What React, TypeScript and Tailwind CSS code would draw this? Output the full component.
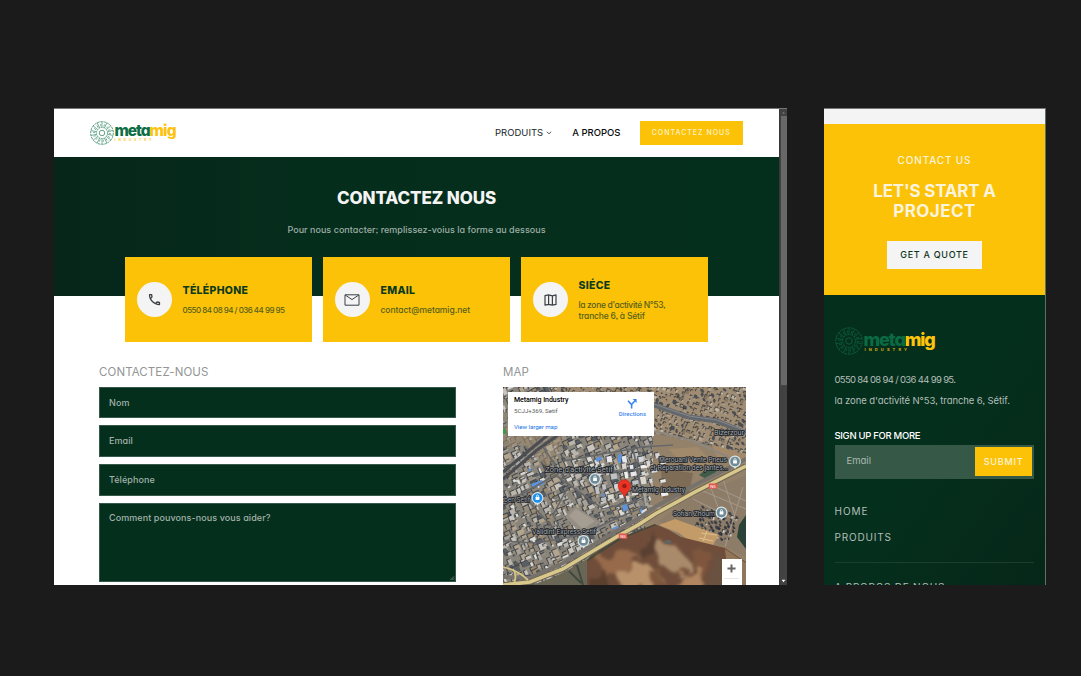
import React from 'react'
import type { ReactNode } from 'react'
import { MdOutlineCall } from 'react-icons/md'

const inter = "font-['Inter','Liberation_Sans',sans-serif] [font-feature-settings:'cv11','ss03']"

function Wheel({ className }: { className: string }) {
  const spokes = Array.from({ length: 14 }, (_, i) => (i * 360) / 14)
  return (
    <svg viewBox="0 0 48 48" className={className} fill="none" stroke="currentColor">
      <circle cx="24" cy="24" r="22.6" strokeWidth="1.5" strokeDasharray="5 1.4" />
      <circle cx="24" cy="24" r="11" strokeWidth="1.2" strokeDasharray="3 1" />
      <circle cx="24" cy="24" r="5.5" strokeWidth="1.4" />
      {spokes.map((a) => (
        <g key={a} transform={`rotate(${a} 24 24)`}>
          <path d="M24 2v11M21.5 6v5" strokeWidth="1.1" />
        </g>
      ))}
    </svg>
  )
}

function DesktopLogo() {
  return (
    <div className="flex h-6 items-center">
      <Wheel className="size-6 text-[#1f7a55]" />
      <div className="ml-px flex flex-col">
        <div className="h-[14px] text-[15.5px] leading-[14px] font-extrabold tracking-[-1.1px] text-[#0d6e45]">
          meta<span className="tracking-[-0.75px] text-[#fdc20a]">mig</span>
        </div>
        <div className="h-1 text-[3.5px] leading-[4px] font-bold tracking-[2.7px] text-[#fdcb3a]">INDUSTRY</div>
      </div>
    </div>
  )
}

function MobileLogo() {
  return (
    <div className="flex h-7 items-center">
      <Wheel className="size-7 text-[#0d6540]" />
      <div className="ml-px flex flex-col">
        <div className="h-[17px] text-[18px] leading-[17px] font-extrabold tracking-[-1.1px] text-[#0a6b42]">
          meta<span className="tracking-[-1.2px] text-[#fdc50a]">mig</span>
        </div>
        <div className="ml-px h-1 text-[4px] leading-[4px] font-bold tracking-[3.1px] text-[#d6a90f]">INDUSTRY</div>
      </div>
    </div>
  )
}

function Header() {
  return (
    <header className="flex h-[47.5px] shrink-0 items-center bg-white pr-9 pl-[35.5px]">
      <DesktopLogo />
      <nav className="ml-auto flex items-center">
        <span className="text-[9.5px] leading-3 text-[#16251f]">PRODUITS</span>
        <svg viewBox="0 0 6 4" className="ml-[3px] h-1 w-[6px]" fill="none" stroke="#333" strokeWidth="0.8">
          <path d="M0.8 0.8 3 2.8 5.2 0.8" />
        </svg>
        <span className="ml-5 text-[9.5px] leading-3 font-medium text-[#0b0b0b]">A PROPOS</span>
        <a className="ml-[19px] flex h-[24.5px] w-[103.5px] items-center justify-center bg-[#fcc207] text-[7px] font-medium tracking-[1px] text-[#fdf1c6]">
          CONTACTEZ NOUS
        </a>
      </nav>
    </header>
  )
}

function Card({ icon, title, children }: { icon: ReactNode; title: string; children: ReactNode }) {
  return (
    <article className="flex h-[85px] w-[187px] items-center bg-[#fcc207] pl-3">
      <div className="flex size-[35px] shrink-0 items-center justify-center rounded-full bg-[#f4f4f4] text-[#3b3f46]">{icon}</div>
      <div className="ml-[11px] pt-0.5">
        <h3 className="text-[10.5px] leading-3 font-extrabold tracking-[0.3px] text-[#0c3a1c]">{title}</h3>
        <div className="mt-2 text-[8.5px] leading-[11px] font-medium text-[#55601a]">{children}</div>
      </div>
    </article>
  )
}

function MailIcon() {
  return (
    <svg viewBox="0 0 16 12" className="h-3 w-4" fill="none" stroke="currentColor" strokeWidth="1">
      <path d="M1 0.8h14v10.4H1zM1.2 1 8 5.6 14.8 1" />
    </svg>
  )
}

function MapIcon() {
  return (
    <svg viewBox="0 0 13 12" className="h-3 w-[13px]" fill="none" stroke="currentColor" strokeWidth="1.2" strokeLinejoin="round">
      <path d="M1 1.6 4.6 0.9 8.4 1.8 12 0.9V10.4L8.4 11.2 4.6 10.3 1 11.1zM4.6 0.9V10.3M8.4 1.8V11.2" />
    </svg>
  )
}

type Block = { x: number; y: number; w: number; h: number; fill: string }

function makeRandom(seed: number) {
  let s = seed
  return () => {
    s = (s * 1664525 + 1013904223) % 4294967296
    return s / 4294967296
  }
}

function makeBlocks(
  seed: number,
  area: [number, number, number, number],
  step: number,
  size: [number, number],
  palette: string[],
): Block[] {
  const rnd = makeRandom(seed)
  const out: Block[] = []
  for (let y = area[1]; y < area[3]; y += step) {
    for (let x = area[0]; x < area[2]; x += step * 1.05) {
      out.push({
        x: x + rnd() * step * 0.8,
        y: y + rnd() * step * 0.8,
        w: size[0] + rnd() * (size[1] - size[0]),
        h: size[0] + rnd() * (size[1] - size[0]),
        fill: palette[Math.floor(rnd() * palette.length)],
      })
    }
  }
  return out
}

const city = makeBlocks(7, [-60, -10, 250, 290], 5.4, [1.6, 7], [
  '#c9c5bd', '#a8a39a', '#dddbd6', '#8d877c', '#7d7b76', '#b3a48e', '#9a8f7e', '#5a5e64', '#b9b5ad', '#9c8a70',
])
const houses = makeBlocks(21, [50, -60, 260, 80], 4.5, [1.2, 4], [
  '#b4a48d', '#9d8a70', '#c2b8a8', '#857763', '#4c5058', '#a89a86', '#a38b6c', '#a08d74',
])
const shops = makeBlocks(5, [0, 0, 72, 44], 9, [3, 7.5], ['#e6e7e8', '#d4d6d8', '#f0f0ee', '#bfc1c3', '#dcd7cd', '#a39a8d'])
const plots = makeBlocks(13, [0, 0, 34, 26], 4, [1.4, 2.8], ['#3a3f47', '#cfc8bc', '#8f877a', '#2f353d'])

function Blocks({ items }: { items: Block[] }) {
  return (
    <>
      {items.map((b, i) => (
        <g key={i}>
          <rect x={b.x - 1} y={b.y - 1} width={b.w} height={b.h} fill="#2e343c" opacity="0.75" />
          <rect x={b.x} y={b.y} width={b.w} height={b.h} fill={b.fill} />
        </g>
      ))}
    </>
  )
}

function Place({ x, y, fill = '#6e8b98' }: { x: number; y: number; fill?: string }) {
  return (
    <g transform={`translate(${x} ${y})`}>
      <path d="M-2.5 4.6 0 7.6 2.5 4.6z" fill="#dfe6e9" />
      <circle r="5.4" fill={fill} stroke="#dfe6e9" strokeWidth="1.2" />
      <rect x="-1.9" y="-1.2" width="3.8" height="3.2" rx="0.5" fill="#fff" />
      <path d="M-1 -1.2v-0.8a1 1 0 0 1 2 0v0.8" fill="none" stroke="#fff" strokeWidth="0.7" />
    </g>
  )
}

function Label({ x, y, w, children }: { x: number; y: number; w: number; children: string }) {
  return (
    <text x={x} y={y} textLength={w} lengthAdjust="spacingAndGlyphs" fontSize="6.8" fill="#a4a9ad" stroke="#1b2025" strokeWidth="1.7" paintOrder="stroke" strokeLinejoin="round" fontFamily="Roboto, sans-serif">
      {children}
    </text>
  )
}

function Satellite() {
  return (
    <svg viewBox="0 0 243 198" className="block h-[198px] w-[243px]">
      <defs>
        <filter id="soft"><feGaussianBlur stdDeviation="0.5" /></filter>
        <filter id="cloud" x="-30%" y="-30%" width="160%" height="160%">
          <feTurbulence type="fractalNoise" baseFrequency="0.06" numOctaves="3" seed="4" result="n" />
          <feDisplacementMap in="SourceGraphic" in2="n" scale="22" result="d" />
          <feGaussianBlur in="d" stdDeviation="1.8" />
        </filter>
        <clipPath id="houseArea"><path d="M151 0H243V68L205 56 168 50 151 45zM50 0H151V6H50z" /></clipPath>
        <clipPath id="field"><path d="M84 198V173L96 160 119 150 152 137 166 143 178 150 222 161 243 175V198z" /></clipPath>
      </defs>
      <rect width="243" height="198" fill="#8a857b" />
      <g filter="url(#soft)">
        <g transform="rotate(-24 0 0) translate(-30 0)"><Blocks items={city} /></g>
        <path d="M0 40 60 46 56 64 44 80 34 72 20 58 0 60z" fill="#9a876e" opacity="0.6" />
        <path d="M150 46 205 58 243 72V198H180L140 136 150 108z" fill="#94816a" />
        <path d="M158 82 190 86 186 108 160 112z" fill="#7e6c56" />
        <path d="M165 62 195 60 210 76 186 82z" fill="#a18a6c" />
        <path d="M206 52 243 62V78L214 70z" fill="#a4896a" />
        <path d="M196 88 206 80 214 84 205 93z" fill="#3f5c48" />
        <g clipPath="url(#houseArea)">
          <rect x="50" width="193" height="75" fill="#a08d74" />
          <g transform="rotate(22 190 30)"><Blocks items={houses} /></g>
        </g>
        <g transform="translate(84 72) rotate(-10)"><Blocks items={shops} /></g>
        <path d="M62 130 72 119 98 136 78 147z" fill="#958e84" />
        <path d="M66 129 73 122 92 134 80 142z" fill="#a59d91" />
        <g fill="#5d94e0">
          <path d="M28 97 39 93 41 97 30 101zM92 72 97 69 99 72 94 75zM115 68 119 67 118 76 115 76zM119 118 124 117 125 123 120 124zM136 121 140 119 138 127zM98 109 102 106 101 110zM110 141 115 139 117 142 112 145zM24 84 28 81 28 84z" />
        </g>
        <path d="M0 85 52 42M0 92 34 63 58 46" stroke="#4b4e52" strokeWidth="3" fill="none" />
        <path d="M0 88 54 44" stroke="#92918e" strokeWidth="0.7" fill="none" />
        <path d="M0 154 34 156 78 148 112 132 146 118M60 74 105 66 140 60 170 58M52 88 72 102 100 122 140 112M40 60 66 98 50 128 62 150M130 62 142 118M20 108 60 152M0 116 24 104 56 86 100 86 138 82" stroke="#66676a" strokeWidth="1.6" fill="none" />
        <path d="M151 18 186 30 214 34 243 46" stroke="#64676c" strokeWidth="5" fill="none" />
        <path d="M151 17 186 29 214 33 243 44" stroke="#8c8f93" strokeWidth="0.8" fill="none" />
        <path d="M150 44 190 54 243 78" stroke="#8d877d" strokeWidth="2" fill="none" />
        <path d="M140 100 143 118 160 122" stroke="#aaa59a" strokeWidth="2" fill="none" />
        <path d="M156 134 178 116 234 92 243 88V170L222 160z" fill="#8d7c68" />
        <g transform="translate(199 118) rotate(16)"><Blocks items={plots} /></g>
        <path d="M200 104 243 122M208 98 243 114M190 112 234 134M206 96 218 128M220 92 232 130M240 100 222 160" stroke="#a3998c" strokeWidth="1" fill="none" />
        <path d="M156 138 172 132 216 148 210 158 184 152 176 146z" fill="#c39b69" />
        <path d="M198 146 214 148M196 151 210 154M204 144 200 154" stroke="#dec08f" strokeWidth="1" />
        <path d="M236 138 243 128V162L234 150z" fill="#2c4339" />
        <g clipPath="url(#field)">
          <rect x="80" y="130" width="163" height="68" fill="#704e3a" />
          <g filter="url(#cloud)">
            <path d="M94 172 118 162 136 168 128 186 104 190z" fill="#966b4c" />
            <path d="M156 156 176 162 188 176 174 188 154 176z" fill="#a98a6b" />
            <path d="M114 186 144 176 164 196 122 206z" fill="#b8916b" />
            <path d="M190 162 208 164 204 190 190 198z" fill="#7f573d" />
            <path d="M132 156 154 146 154 166 136 168z" fill="#5a4030" />
            <path d="M212 166 244 178 240 204 206 204z" fill="#6a513f" />
            <path d="M88 190 102 182 108 204 88 204z" fill="#5b3f2f" />
            <path d="M178 186 198 180 200 204 172 204z" fill="#b08560" />
            <path d="M146 184 158 182 164 200 150 202z" fill="#80583e" />
          </g>
          <ellipse cx="165" cy="155" rx="3.5" ry="2.2" fill="#65645f" />
          <path d="M84 173 119 150 152 137" stroke="#2f4236" strokeWidth="3" fill="none" opacity="0.6" />
        </g>
        <path d="M222 162 243 176V198H226z" fill="#9a8061" opacity="0.8" />
        <path d="M30 198 56 188 84 172V198z" fill="#6b6655" />
        <path d="M66 184 78 196M74 178 80 198" stroke="#3f4a40" strokeWidth="2" />
        <path d="M0 190 27 191 60 176 115 143 135 132 152 120 192 98 243 72" stroke="#77736c" strokeWidth="4" fill="none" />
        <path d="M0 198 27 195 60 182 115 149 135 138 152 127 192 105 243 79" stroke="#6d6554" strokeWidth="5.4" fill="none" />
        <path d="M0 198 27 195 60 182 115 149 135 138 152 127 192 105 243 79" stroke="#d9c88c" strokeWidth="3.6" fill="none" />
        <path d="M0 180Q14 183 25 193M10 182Q15 190 10 198" stroke="#d6c585" strokeWidth="1.7" fill="none" />
      </g>
      <path d="M0 42h3v5H0z" fill="#3f9a45" />
      <Label x={42} y={84.5} w={68}>Zone d'activité Setif</Label>
      <Label x={156} y={75} w={68}>Merouani Vente Pneus</Label>
      <Label x={147} y={82.5} w={78}>et Réparation des jantes...</Label>
      <Label x={129} y={105} w={53}>Metamig Industry</Label>
      <Label x={170} y={129} w={42}>Sofian Zhoum</Label>
      <Label x={29} y={146.5} w={64}>Validint Express Setif</Label>
      <Label x={1} y={114.5} w={26}>ben Setif</Label>
      <Label x={211} y={48} w={30}>Bizerzour</Label>
      <Place x={92} y={92} />
      <Place x={232} y={74.5} />
      <Place x={218.5} y={125.5} />
      <Place x={80.5} y={154} />
      <Place x={34.5} y={111} fill="#1a91ee" />
      {[[120, 149], [210, 99]].map(([x, y]) => (
        <g key={x} transform={`translate(${x} ${y})`}>
          <rect x="-4.2" y="-2.6" width="8.4" height="5.4" rx="0.8" fill="#e0574c" />
          <text y="1.7" textAnchor="middle" fontSize="4.4" fill="#fff" fontFamily="Roboto, sans-serif">N5</text>
        </g>
      ))}
      <path d="M121.4 111C120.5 106 115 103.5 115 99a6.4 6.4 0 0 1 12.8 0C127.8 103.5 122.3 106 121.4 111z" fill="#ea3323" stroke="#b3261a" strokeWidth="0.4" />
      <circle cx="121.4" cy="99" r="2.3" fill="#9c1c14" />
    </svg>
  )
}

function MapPanel() {
  return (
    <div className="relative mt-2 h-[198px] w-[243px] overflow-hidden font-['Roboto',sans-serif]">
      <Satellite />
      <div className="absolute top-[5px] left-[5px] flex h-[44px] w-[146px] justify-between bg-white pt-1 pr-2 pl-[6px]">
        <div className="flex flex-col whitespace-nowrap">
          <span className="text-[7px] leading-[9px] font-medium tracking-[-0.05px] text-black">Metamig Industry</span>
          <span className="mt-[2px] text-[6.2px] leading-[8px] text-[#5b5b5b]">5CJJ+369, Setif</span>
          <span className="mt-[8px] text-[6.2px] leading-[8px] tracking-[-0.08px] text-[#1a73e8]">View larger map</span>
        </div>
        <div className="flex flex-col items-center">
          <svg viewBox="0 0 10 11" className="mt-[2px] h-[11px] w-[10px]" fill="none" stroke="#3b86f0" strokeWidth="1.6">
            <path d="M4.6 10.5V6.5L8 2.8M4.6 6.6 1 2.8" />
            <path d="M5.6 1h4v4z" fill="#3b86f0" stroke="none" />
          </svg>
          <span className="mt-px text-[6px] leading-[8px] font-medium text-[#3b86f0]">Directions</span>
        </div>
      </div>
      <div className="absolute top-[171.5px] left-[218.5px] flex h-[27px] w-[20px] flex-col items-center bg-white">
        <svg viewBox="0 0 10 10" className="mt-[5.5px] size-[9px]" stroke="#666" strokeWidth="2.2">
          <path d="M5 0.5v9M0.5 5h9" />
        </svg>
        <span className="mt-[5px] h-px w-[15px] bg-[#e6e6e6]" />
      </div>
    </div>
  )
}

const field =
  'flex w-[357px] border border-[#4d6b5e]/70 bg-[#052f1d] pl-[9px] text-[9px] font-medium tracking-[0.08px] text-[#a3b2aa]'

function ContactForm() {
  return (
    <form className="w-[357px]">
      <h2 className="text-[11.5px] leading-[14px] tracking-[0.1px] text-[#929694]">CONTACTEZ-NOUS</h2>
      <div className={`${field} mt-[7.5px] h-[31.5px] items-center`}>Nom</div>
      <div className={`${field} mt-[6.5px] h-8 items-center`}>Email</div>
      <div className={`${field} mt-[7px] h-8 items-center`}>Téléphone</div>
      <div className={`${field} mt-[7px] h-[79px] justify-between pt-[8px] leading-3`}>
        Comment pouvons-nous vous aider?
        <svg viewBox="0 0 6 6" className="size-[6px] self-end" stroke="#9aa8a1" strokeWidth="0.7">
          <path d="M1.5 5 5 1.5M3.5 5 5 3.5" />
        </svg>
      </div>
    </form>
  )
}

function Scrollbar() {
  return (
    <div className="flex w-2 flex-col items-center border-l border-[#383838] bg-[#424242]">
      <svg viewBox="0 0 7 8" className="h-[7px] w-[7px] shrink-0"><path d="M2 5h3L3.5 3.3z" fill="#858585" /></svg>
      <div className="h-[269px] w-[6px] bg-[#686868]" />
      <svg viewBox="0 0 7 8" className="mt-auto h-2 w-[7px] shrink-0"><path d="M1.600 2.8h3.800L3.500 5.200z" fill="#fff" /></svg>
    </div>
  )
}

function DesktopWindow() {
  return (
    <section className="flex h-[477px] w-[733px] shrink-0 overflow-hidden border-t border-[#777]">
      <div className="flex w-[725px] flex-col bg-white">
        <Header />
        <div className="flex h-[139px] shrink-0 flex-col items-center bg-linear-to-r from-[#06261a] via-[#052d1c] via-35% to-[#052f1d]">
          <h1 className="mt-[30px] text-[17px] leading-[22px] font-extrabold tracking-[-0.1px] text-[#f4f4f4]">CONTACTEZ NOUS</h1>
          <p className="mt-[15.5px] text-[9px] leading-3 font-medium tracking-[0.03px] text-[#9eaea6]">
            Pour nous contacter; remplissez-voius la forme au dessous
          </p>
        </div>
        <div className="-mt-[38.5px] mr-px flex shrink-0 justify-center gap-[11px]">
          <Card icon={<MdOutlineCall size={15} />} title="TÉLÉPHONE">
            <span className="text-[8px] tracking-[-0.53px] whitespace-nowrap">0550 84 08 94 / 036 44 99 95</span>
          </Card>
          <Card icon={<MailIcon />} title="EMAIL"><span className="tracking-[-0.05px]">contact@metamig.net</span></Card>
          <Card icon={<MapIcon />} title="SIÉCE">
            <span className="block tracking-[-0.35px]">la zone d'activité N°53,</span>
            <span className="block tracking-[-0.2px]">tranche 6, à Sétif</span>
          </Card>
        </div>
        <div className="mt-[23px] flex pl-[45px]">
          <ContactForm />
          <div className="ml-[47px]">
            <h2 className="text-[11.5px] leading-[14px] tracking-[0.1px] text-[#929694]">MAP</h2>
            <MapPanel />
          </div>
        </div>
      </div>
      <Scrollbar />
    </section>
  )
}

function MobileWindow() {
  return (
    <section className="flex h-[477px] w-[222px] shrink-0 flex-col overflow-hidden border-t border-r border-t-[#777] border-r-[#5d7267]">
      <div className="h-[15px] shrink-0 bg-[#f4f4f4]" />
      <div className="flex h-[171px] shrink-0 flex-col items-center bg-[#fcc207] text-[#faf3de]">
        <p className="mt-[29px] text-[10px] leading-[14px] font-medium tracking-[0.85px]">CONTACT US</p>
        <h2 className="mt-[14px] text-center text-[17px] leading-[20px] font-bold tracking-[-0.2px]">
          LET'S START A
          <br />
          <span className="tracking-[0.4px]">PROJECT</span>
        </h2>
        <a className="mt-[20px] flex h-[28px] w-[95px] shrink-0 items-center justify-center bg-[#f4f4f4] text-[9px] font-medium tracking-[0.7px] text-[#0c3321]">
          GET A QUOTE
        </a>
      </div>
      <div className="flex h-[290px] shrink-0 flex-col bg-linear-to-br from-[#052f1d] from-50% to-[#062719] pr-[11px] pl-[10.5px] text-[#b3bfb8]">
        <div className="mt-8"><MobileLogo /></div>
        <p className="mt-[17.5px] text-[9.5px] leading-[14px] tracking-[-0.67px] whitespace-nowrap">0550 84 08 94 / 036 44 99 95.</p>
        <p className="mt-[7px] text-[9.5px] leading-[14px] tracking-[-0.08px] whitespace-nowrap">la zone d'activité N°53, tranche 6, Sétif.</p>
        <p className="mt-[21px] text-[9.5px] leading-[14px] font-medium tracking-[-0.31px] text-white">SIGN UP FOR MORE</p>
        <div className="mt-[2px] flex h-[34px] shrink-0 items-center justify-between bg-[#365847] pr-[2px] pl-3 text-[9.5px] text-[#a9b8b0]">
          Email
          <span className="flex h-[29px] w-[57px] items-center justify-center bg-[#fcc207] text-[9px] font-medium tracking-[0.8px] text-[#fbf3d8]">SUBMIT</span>
        </div>
        <p className="mt-[25px] text-[10px] leading-[14px] tracking-[1px]">HOME</p>
        <p className="mt-[12px] text-[10px] leading-[14px] tracking-[0.83px]">PRODUITS</p>
        <div className="mt-[18px] h-px shrink-0 bg-[#1a3f2e]" />
        <p className="mt-[17px] text-[10px] leading-[14px] tracking-[0.76px]">A PROPOS DE NOUS</p>
      </div>
    </section>
  )
}

export default function App() {
  return (
    <main className={`${inter} flex h-[676px] w-[1081px] overflow-hidden bg-[#1b1b1b] pt-[108px] pl-[54px]`}>
      <DesktopWindow />
      <div className="ml-[37px]"><MobileWindow /></div>
    </main>
  )
}
